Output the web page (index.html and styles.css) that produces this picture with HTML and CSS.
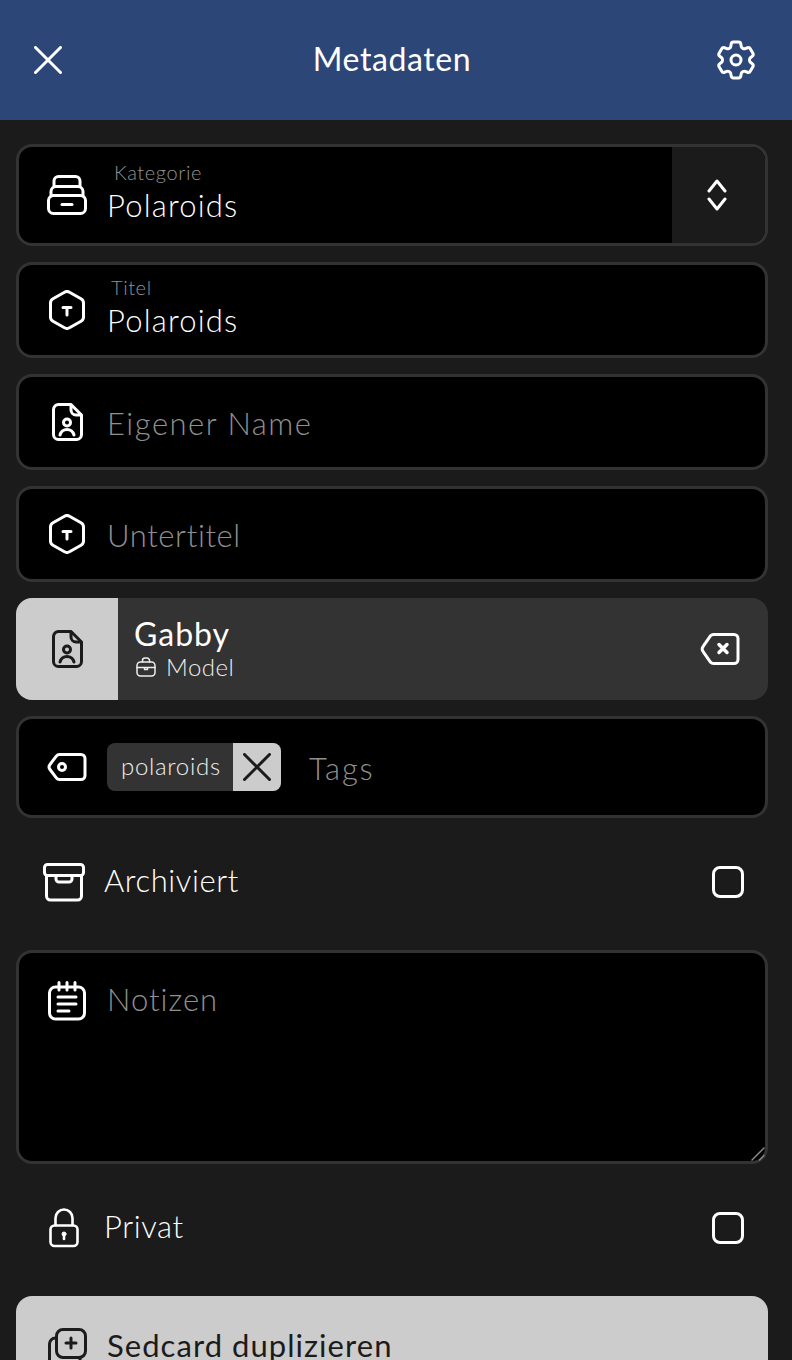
FILE: index.html
```html
<!DOCTYPE html>
<html lang="de">
<head>
<meta charset="utf-8">
<title>Metadaten</title>
<link rel="stylesheet" href="styles.css">
</head>
<body>
<header class="topbar">
  <svg class="ic-close" viewBox="0 0 28 28"><path d="M1.5 1.5l25 25M26.5 1.5l-25 25"/></svg>
  <h1 class="topbar-title">Metadaten</h1>
  <svg class="ic-gear" viewBox="0 0 24 24"><path d="M9.594 3.94c.09-.542.56-.94 1.11-.94h2.593c.55 0 1.02.398 1.11.94l.213 1.281c.063.374.313.686.645.87.074.04.147.083.22.127.325.196.72.257 1.075.124l1.217-.456a1.125 1.125 0 0 1 1.37.49l1.296 2.247a1.125 1.125 0 0 1-.26 1.431l-1.003.827c-.293.241-.438.613-.43.992a7.723 7.723 0 0 1 0 .255c-.008.378.137.75.43.991l1.004.827c.424.35.534.955.26 1.43l-1.298 2.247a1.125 1.125 0 0 1-1.369.491l-1.217-.456c-.355-.133-.75-.072-1.076.124a6.47 6.47 0 0 1-.22.128c-.331.183-.581.495-.644.869l-.213 1.281c-.09.543-.56.94-1.11.94h-2.594c-.55 0-1.019-.398-1.11-.94l-.213-1.281c-.062-.374-.312-.686-.644-.87a6.52 6.52 0 0 1-.22-.127c-.325-.196-.72-.257-1.076-.124l-1.217.456a1.125 1.125 0 0 1-1.369-.49l-1.297-2.247a1.125 1.125 0 0 1 .26-1.431l1.004-.827c.292-.24.437-.613.43-.991a6.932 6.932 0 0 1 0-.255c.007-.38-.138-.751-.43-.992l-1.004-.827a1.125 1.125 0 0 1-.26-1.43l1.297-2.247a1.125 1.125 0 0 1 1.37-.491l1.216.456c.356.133.751.072 1.076-.124.072-.044.146-.086.22-.128.332-.183.582-.495.644-.869l.214-1.28Z"/><circle cx="12" cy="12" r="2.500"/></svg>
</header>
<main class="form">
  <div class="field field-select">
    <svg class="ic" viewBox="0 0 40 40"><rect x="1.5" y="20.5" width="37" height="18" rx="5"/><path d="M4 21v-4.500a5 5 0 0 1 5-5h22a5 5 0 0 1 5 5V21"/><path d="M7 11.500V6a4.500 4.500 0 0 1 4.500-4.500h17A4.500 4.500 0 0 1 33 6v5.500"/><path d="M15 29.500h10"/></svg>
    <div class="stack">
      <span class="label label-kat">Kategorie</span>
      <span class="value">Polaroids</span>
    </div>
    <div class="select-arrows">
      <svg class="ic-chev" viewBox="0 0 20 32"><path d="M2 12l8-10 8 10M2 20l8 10 8-10"/></svg>
    </div>
  </div>
  <div class="field field-std">
    <svg class="ic" viewBox="0 0 40 40"><path d="M17.500 2.200a5 5 0 0 1 5 0L34 8.800a5 5 0 0 1 2.500 4.300v13.800A5 5 0 0 1 34 31.200l-11.500 6.600a5 5 0 0 1-5 0L6 31.200a5 5 0 0 1-2.500-4.300V13.100A5 5 0 0 1 6 8.800z"/><path d="M16 17.500h8M20 17.500V25"/></svg>
    <div class="stack">
      <span class="label label-tit">Titel</span>
      <span class="value">Polaroids</span>
    </div>
  </div>
  <div class="field field-std">
    <svg class="ic" viewBox="0 0 40 40"><path d="M11.500 2.500H24L34.500 13v19.500a5 5 0 0 1-5 5h-18a5 5 0 0 1-5-5v-25a5 5 0 0 1 5-5z"/><path d="M24 3v5a5 5 0 0 0 5 5h5"/><circle cx="20" cy="20.500" r="3.500"/><path d="M13 33c1-3.500 4-5.500 7-5.500s6 2 7 5.500"/></svg>
    <span class="placeholder ph-name">Eigener Name</span>
  </div>
  <div class="field field-std">
    <svg class="ic" viewBox="0 0 40 40"><path d="M17.500 2.200a5 5 0 0 1 5 0L34 8.800a5 5 0 0 1 2.500 4.300v13.800A5 5 0 0 1 34 31.200l-11.500 6.600a5 5 0 0 1-5 0L6 31.200a5 5 0 0 1-2.500-4.300V13.100A5 5 0 0 1 6 8.800z"/><path d="M16 17.500h8M20 17.500V25"/></svg>
    <span class="placeholder ph-sub">Untertitel</span>
  </div>
  <div class="person">
    <div class="person-thumb">
      <svg class="ic ic-dark" viewBox="0 0 40 40"><path d="M11.500 2.500H24L34.500 13v19.500a5 5 0 0 1-5 5h-18a5 5 0 0 1-5-5v-25a5 5 0 0 1 5-5z"/><path d="M24 3v5a5 5 0 0 0 5 5h5"/><circle cx="20" cy="20.500" r="3.500"/><path d="M13 33c1-3.500 4-5.500 7-5.500s6 2 7 5.500"/></svg>
    </div>
    <div class="person-text">
      <span class="person-name">Gabby</span>
      <span class="person-role">
        <svg class="ic-case" viewBox="0 0 20 20"><rect x="1" y="5" width="18" height="14" rx="3.500"/><path d="M6.500 5V3.500A2.500 2.500 0 0 1 9 1h2a2.500 2.500 0 0 1 2.500 2.500V5M1 10.500h18M8.500 10.500h3v2h-3z"/></svg>
        Model
      </span>
    </div>
    <svg class="ic ic-back" viewBox="0 0 40 40"><path d="M13.500 5.500H34a4 4 0 0 1 4 4v21a4 4 0 0 1-4 4H13.500a4 4 0 0 1-2.900-1.200L3.300 22.800a4 4 0 0 1 0-5.600l7.300-10.500a4 4 0 0 1 2.900-1.200z"/><path class="heavy" d="M19 15.500l8 8M27 15.500l-8 8"/></svg>
  </div>
  <div class="field field-tags">
    <svg class="ic" viewBox="0 0 40 40"><path d="M12.500 7.500H34a4 4 0 0 1 4 4v17a4 4 0 0 1-4 4H12.500a4 4 0 0 1-3.200-1.600L3 22.500a4 4 0 0 1 0-5l6.300-8.400a4 4 0 0 1 3.200-1.600z"/><circle cx="15" cy="20" r="3.500"/></svg>
    <div class="chip">
      <span class="chip-text">polaroids</span>
      <span class="chip-x"><svg class="ic-chipx" viewBox="0 0 28 28"><path d="M1.500 1.500l25 25M26.500 1.500l-25 25"/></svg></span>
    </div>
    <span class="placeholder ph-tags">Tags</span>
  </div>
  <div class="toggle">
    <svg class="ic-archive" viewBox="0 0 42 40"><rect x="1.500" y="2.500" width="39" height="11" rx="3"/><path d="M3.500 13.500V34a4 4 0 0 0 4 4h27a4 4 0 0 0 4-4V13.500"/><path d="M13 14v3a3 3 0 0 0 3 3h10a3 3 0 0 0 3-3v-3"/></svg>
    <span class="toggle-text">Archiviert</span>
    <span class="checkbox"></span>
  </div>
  <div class="field field-notes">
    <svg class="ic" viewBox="0 0 40 40"><rect x="2.500" y="6" width="35" height="32" rx="6"/><path d="M12 1.500V9M20 1.500V9M28 1.500V9M11 16h18M11 23h18M11 30h11"/></svg>
    <span class="placeholder">Notizen</span>
    <svg class="grip" viewBox="0 0 14 14"><path d="M1 13L13 1M8.500 13L13 8.500"/></svg>
  </div>
  <div class="toggle">
    <svg class="ic-lock" viewBox="0 0 40 40"><rect x="3.500" y="17.500" width="27" height="20.500" rx="4"/><path d="M8.500 17V10a8.500 8.500 0 0 1 17 0v7"/><circle class="dot" cx="17" cy="26" r="2"/><path d="M17 26v5"/></svg>
    <span class="toggle-text toggle-text-lock">Privat</span>
    <span class="checkbox"></span>
  </div>
  <button class="action" type="button">
    <svg class="ic ic-dark" viewBox="0 0 40 40"><rect x="9.500" y="1.500" width="29" height="28" rx="6.500"/><path d="M24 10v10M19 15h10"/><path d="M8.500 10A6 6 0 0 0 2.500 16V40M33 30v1.500a5 5 0 0 1-5 5H13"/></svg>
    <span class="action-text">Sedcard duplizieren</span>
  </button>
</main>
</body>
</html>
```
FILE: styles.css
```css
* { box-sizing: border-box; }
html, body { margin: 0; height: 1360px; overflow: hidden; }
body { background: #1b1b1b; color: #fff; font-family: Lato, "Noto Sans", sans-serif; font-weight: 300; }
svg { display: block; flex: none; fill: none; stroke: currentColor; stroke-width: 3; stroke-linecap: round; stroke-linejoin: round; }

.topbar { height: 120px; background: #2c4677; display: grid; grid-template-columns: 1fr auto 1fr; align-items: center; padding: 0 42px 0 34px; }
.topbar-title { margin: 0 0 2px; font-size: 32px; font-weight: 400; line-height: 38px; letter-spacing: .6px; }
.ic-close { width: 28px; height: 28px; }
.ic-gear { width: 48px; height: 48px; margin-right: -10px; stroke-width: 1.5; justify-self: end; }

.form { display: flex; flex-direction: column; gap: 16px; padding: 24px 24px 0 16px; }

.field { background: #000; border: 3px solid #333; border-radius: 16px; display: flex; align-items: center; gap: 21px; padding-left: 28px; }
.field-std { height: 96px; }
.field-select { height: 102px; overflow: hidden; }
.field-tags { height: 102px; gap: 20px; }
.field-notes { height: 214px; align-items: flex-start; padding-top: 28px; position: relative; }

.ic { width: 40px; height: 40px; }
.ic-dark { color: #1b1b1b; }

.stack { display: flex; flex-direction: column; flex: 1; padding-bottom: 5px; }
.label { font-size: 20px; line-height: 20px; letter-spacing: .6px; color: #929292; margin-bottom: 4px; }
.label-kat { margin-left: 6px; }
.label-tit { margin-left: 3px; }
.value { font-size: 31px; line-height: 38px; letter-spacing: 1.2px; margin-left: -1px; color: #fff; }
.placeholder { font-size: 31px; line-height: 36px; letter-spacing: 1px; margin-left: -1px; color: #909090; }
.field-std .placeholder { margin-top: 2px; }
.ph-name { letter-spacing: 1.5px; }
.ph-sub { letter-spacing: .6px; }
.ph-tags { letter-spacing: 1.8px; }

.select-arrows { width: 93px; align-self: stretch; background: #1b1b1b; display: flex; align-items: center; justify-content: center; padding-right: 3px; }
.ic-chev { width: 20px; height: 32px; }

.person { height: 102px; background: #333; border-radius: 16px; display: flex; align-items: center; overflow: hidden; }
.person-thumb { width: 102px; align-self: stretch; background: #ccc; display: flex; align-items: center; justify-content: center; }
.person-text { flex: 1; display: flex; flex-direction: column; padding-left: 16px; }
.person-name { font-size: 32px; line-height: 36px; font-weight: 400; letter-spacing: 1px; }
.person-role { display: flex; align-items: center; gap: 10px; font-size: 24px; line-height: 30px; letter-spacing: .5px; color: #eee; }
.ic-case { width: 20px; height: 20px; margin-left: 2px; stroke-width: 1.5; }
.ic-back { margin-right: 28px; }
.heavy { stroke-width: 3.5; }

.chip { display: flex; height: 48px; border-radius: 8px; overflow: hidden; background: #333; }
.chip-text { font-size: 24px; line-height: 46px; letter-spacing: .7px; padding: 0 0 0 14px; color: #eee; width: 126px; }
.chip-x { width: 48px; background: #ccc; display: flex; align-items: center; justify-content: center; color: #1b1b1b; }
.ic-chipx { width: 28px; height: 28px; }
.field-tags .placeholder { margin-left: 8px; margin-top: 2px; }

.toggle { height: 100px; padding: 0 24px 4px 27px; display: flex; align-items: center; }
.ic-archive { width: 42px; height: 40px; }
.ic-lock { width: 40px; height: 40px; margin-left: 4px; stroke-width: 2.6; }
.dot { fill: currentColor; stroke-width: 1; }
.toggle-text { font-size: 31px; line-height: 36px; letter-spacing: .6px; margin-left: 19px; margin-bottom: 4px; flex: 1; color: #fff; }
.toggle-text-lock { margin-left: 17px; }
.checkbox { width: 32px; height: 32px; border: 3px solid #fff; border-radius: 8px; }

.grip { position: absolute; right: 0; bottom: 0; width: 14px; height: 14px; color: #888; stroke-width: 1.5; }

.action { height: 96px; width: 100%; border: 0; border-radius: 16px; background: #ccc; color: #1b1b1b; display: flex; align-items: flex-start; gap: 20px; padding: 31px 0 0 31px; font-family: inherit; text-align: left; }
.action-text { font-size: 31px; line-height: 36px; font-weight: 400; letter-spacing: 1.05px; }
.action .ic { margin-top: 1px; }
```
